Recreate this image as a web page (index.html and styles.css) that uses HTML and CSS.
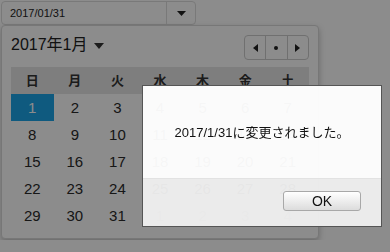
FILE: index.html
```html
<!DOCTYPE html>
<html lang="ja">
	<head>
		<meta charset="utf-8">
		<meta name="viewport" content="width=device-width,initial-scale=1">
		<title>Date Picker</title>
		<link rel="stylesheet" href="styles.css">
	</head>

	<body>
		<div class="page">
			<div class="datepicker">
				<div class="date-input">
					<span class="date-input__value">2017/01/31</span>
					<button class="date-input__toggle" aria-label="カレンダーを開く">
						<svg width="9" height="5" viewBox="0 0 9 5"><path d="M0 0h9L4.5 5z" fill="#222"/></svg>
					</button>
				</div>

				<div class="calendar">
					<div class="calendar__head">
						<div class="calendar__title">
							<span>2017年1月</span>
							<svg width="10" height="6" viewBox="0 0 10 6"><path d="M0 0h10L5 6z" fill="#333"/></svg>
						</div>
						<div class="calendar__nav">
							<button aria-label="前の月"><svg width="5" height="8" viewBox="0 0 5 8"><path d="M5 0v8L0 4z" fill="#222"/></svg></button>
							<button aria-label="今月"><svg width="4" height="4" viewBox="0 0 4 4"><circle cx="2" cy="2" r="2" fill="#222"/></svg></button>
							<button aria-label="次の月"><svg width="5" height="8" viewBox="0 0 5 8"><path d="M0 0v8l5-4z" fill="#222"/></svg></button>
						</div>
					</div>

					<div class="calendar__grid">
						<div class="calendar__weekday">日</div>
						<div class="calendar__weekday">月</div>
						<div class="calendar__weekday">火</div>
						<div class="calendar__weekday">水</div>
						<div class="calendar__weekday">木</div>
						<div class="calendar__weekday">金</div>
						<div class="calendar__weekday">土</div>

						<div class="calendar__day calendar__day--selected">1</div>
						<div class="calendar__day">2</div>
						<div class="calendar__day">3</div>
						<div class="calendar__day">4</div>
						<div class="calendar__day">5</div>
						<div class="calendar__day">6</div>
						<div class="calendar__day">7</div>

						<div class="calendar__day">8</div>
						<div class="calendar__day">9</div>
						<div class="calendar__day">10</div>
						<div class="calendar__day">11</div>
						<div class="calendar__day">12</div>
						<div class="calendar__day">13</div>
						<div class="calendar__day">14</div>

						<div class="calendar__day">15</div>
						<div class="calendar__day">16</div>
						<div class="calendar__day">17</div>
						<div class="calendar__day">18</div>
						<div class="calendar__day">19</div>
						<div class="calendar__day">20</div>
						<div class="calendar__day">21</div>

						<div class="calendar__day">22</div>
						<div class="calendar__day">23</div>
						<div class="calendar__day">24</div>
						<div class="calendar__day">25</div>
						<div class="calendar__day">26</div>
						<div class="calendar__day">27</div>
						<div class="calendar__day">28</div>

						<div class="calendar__day">29</div>
						<div class="calendar__day">30</div>
						<div class="calendar__day">31</div>
						<div class="calendar__day calendar__day--other">1</div>
						<div class="calendar__day calendar__day--other">2</div>
						<div class="calendar__day calendar__day--other">3</div>
						<div class="calendar__day calendar__day--other">4</div>
					</div>
				</div>
			</div>
		</div>

		<!-- Modal -->
		<div class="backdrop"></div>
		<div class="dialog" role="dialog">
			<div class="dialog__body">2017/1/31に変更されました。</div>
			<div class="dialog__footer">
				<button class="dialog__ok">OK</button>
			</div>
		</div>
	</body>
</html>
```

FILE: styles.css
```css
/* PAGE STYLING */
* {
	box-sizing: border-box;
}
body {
	background: #fff;
	color: #333;
	font-family: 'Liberation Sans', 'Noto Sans CJK JP', sans-serif;
	line-height: 1;
	margin: 0;
}
button {
	background: none;
	border: none;
	color: inherit;
	cursor: pointer;
	font-family: inherit;
	padding: 0;
}
.page {
	padding: 1px;
}
/* END PAGE STYLING */


/* DATE INPUT */
.date-input {
	align-items: stretch;
	border: 1px solid #ddd;
	border-radius: 4px;
	display: flex;
	height: 24px;
	width: 195px;
}
.date-input__value {
	align-items: center;
	display: flex;
	flex: 1;
	font-size: 11px;
	padding-inline-start: 8px;
	color: #222;
}
.date-input__toggle {
	border-inline-start: 1px solid #ddd;
	display: grid;
	place-items: center;
	width: 29px;
}

/* CALENDAR */
.calendar {
	background: #fff;
	border: 1px solid #d9d9d9;
	border-radius: 4px;
	box-shadow: 0 3px 6px rgba(0, 0, 0, 0.25);
	padding: 9px;
	width: 318px;
}
.calendar__head {
	align-items: flex-start;
	display: flex;
	height: 25px;
	justify-content: space-between;
	margin-block-end: 7px;
}
.calendar__title {
	align-items: center;
	display: flex;
	font-size: 16px;
	gap: 6px;
	line-height: 20px;
	color: #222;
}
.calendar__title svg {
	margin-block-start: 2px;
}
.calendar__nav {
	border: 1px solid #ccc;
	border-radius: 4px;
	display: flex;
	height: 25px;
	width: 65px;
}
.calendar__nav button {
	display: grid;
	flex: 1;
	place-items: center;

	& + button {
		border-inline-start: 1px solid #ccc;
	}
}
.calendar__grid {
	display: grid;
	grid-auto-rows: 27px;
	grid-template-columns: repeat(7, 1fr);
	width: 298px;
}
.calendar__weekday,
.calendar__day {
	align-items: center;
	display: flex;
	justify-content: center;
}
.calendar__weekday {
	background: #e6e6e6;
	font-size: 13px;
	font-weight: bold;
}
.calendar__day {
	color: #2a2a2a;
	font-size: 15px;
}
.calendar__day--selected {
	background: #1da4e8;
	color: #fff;
}
.calendar__day--other {
	color: #999;
}

/* MODAL */
.backdrop {
	background: rgba(0, 0, 0, 0.45);
	inset: 0;
	position: fixed;
}
.dialog {
	border: 1px solid #555;
	display: flex;
	flex-direction: column;
	height: 142px;
	left: 142px;
	position: fixed;
	top: 85px;
	width: 240px;
}
.dialog__body {
	align-items: center;
	background: rgba(255, 255, 255, 0.96);
	color: #111;
	display: flex;
	flex: 1;
	font-size: 13px;
	justify-content: center;
}
.dialog__footer {
	background: rgba(238, 238, 238, 0.96);
	border-block-start: 1px solid #e2e2e2;
	display: flex;
	height: 48px;
	justify-content: flex-end;
	padding: 12px 20px 0;
}
.dialog__ok {
	background: linear-gradient(#fff, #dcdcdc);
	border: 1px solid #a8a8a8;
	border-radius: 3px;
	color: #111;
	font-size: 14px;
	height: 20px;
	width: 78px;
}
```
